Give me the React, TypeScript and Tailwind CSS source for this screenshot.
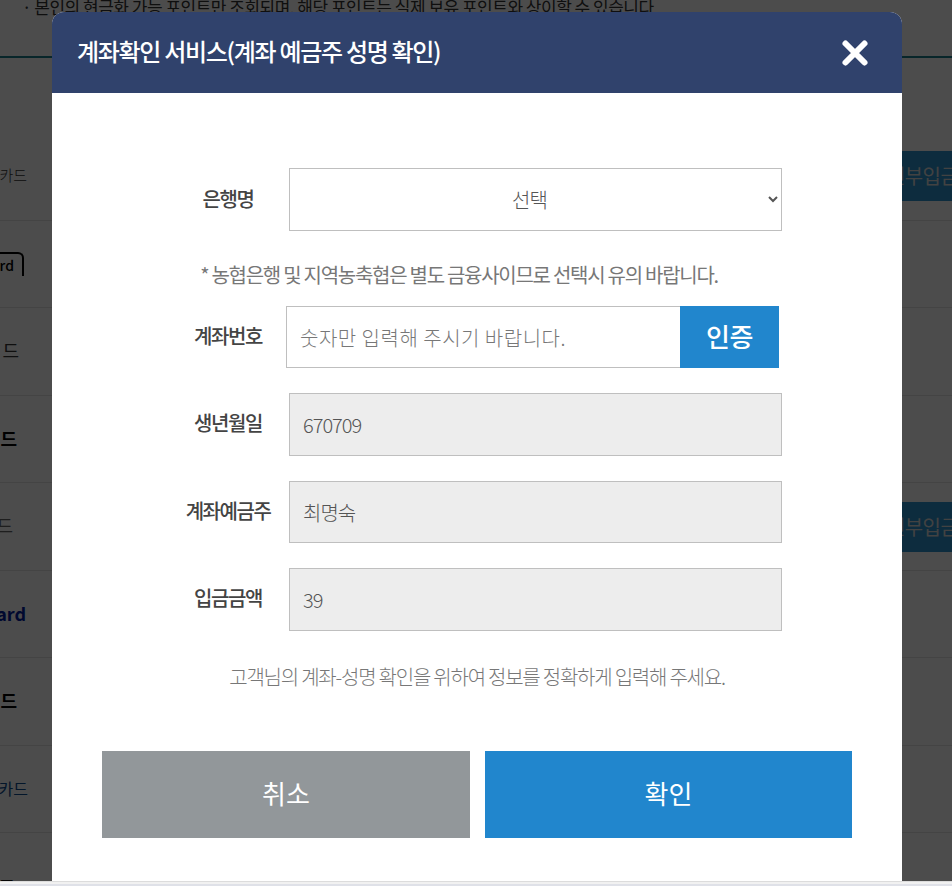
import React from "react";

const font = "font-['Noto_Sans_CJK_KR','Noto_Sans',sans-serif]";

// rows of the card list that sits behind the dialog
const rows = [
	{ h: "h-[87px]", w: "w-[27px] -mt-[3px]", text: "카드", cls: "text-[15px] text-[#333] font-light", pay: "-mt-[2px]" },
	{ h: "h-[87px]", w: "w-[24px]", text: "rd", cls: "text-[14px] text-black font-medium", outline: true },
	{ h: "h-[88px]", w: "w-[19px] -mt-[2px]", text: "드", cls: "text-[18px] text-[#333]" },
	{ h: "h-[87px]", w: "w-[17px] -mt-[2px]", text: "드", cls: "text-[18px] text-black font-bold" },
	{ h: "h-[88px]", w: "w-[13px] -mt-[2px]", text: "드", cls: "text-[18px] text-[#666]", pay: "mt-[1px]" },
	{ h: "h-[87px]", w: "w-[26px] -mt-[2px]", text: "ard", cls: "text-[18px] text-[#00209f] font-bold" },
	{ h: "h-[88px]", w: "w-[17px] -mt-[2px]", text: "드", cls: "text-[18px] text-black font-bold" },
	{ h: "h-[87px]", w: "w-[28px] -mt-[2px]", text: "카드", cls: "text-[16px] text-[#0a4a8c]" },
	{ h: "h-[87px] pt-[20px]", w: "w-[15px]", text: "드", cls: "text-[18px] text-[#111] font-bold" },
];

function Background() {
	return (
		<div className="h-full bg-white">
			<div className="h-[58px] border-b-2 border-[#1b7f8c] overflow-hidden">
				<p className="pl-[22px] text-[17px] leading-[16px] -mt-[1px] text-[#333] whitespace-nowrap tracking-[-0.5px]">
					· 본인의 현금화 가능 포인트만 조회되며, 해당 포인트는 실제 보유 포인트와 상이할 수 있습니다
				</p>
			</div>
			<div className="h-[76px]" />
			{rows.map((row, i) => (
				<div key={i} className={`${row.h} flex items-center justify-between border-b border-[#e3e3e3] bg-[#fefefe]`}>
					<div className={`${row.w} flex justify-end whitespace-nowrap ${row.cls}`}>
						{row.outline ? (
							<span className="border-t-2 border-r-2 border-black rounded-tr-[6px] pr-[8px] h-[24px] leading-[22px]">{row.text}</span>
						) : (
							row.text
						)}
					</div>
					{row.pay && (
						<div className={`w-[70px] h-[50px] bg-[#2c93cf] text-[#ddd] text-[20px] leading-[50px] tracking-[-0.6px] whitespace-nowrap overflow-hidden pl-[5px] ${row.pay}`}>
							전부입금
						</div>
					)}
				</div>
			))}
		</div>
	);
}

function Label({ children }: { children: React.ReactNode }) {
	return (
		<div className="w-[100px] ml-[126px] mr-[11px] text-center text-[20px] leading-[26px] font-medium text-[#444] tracking-[-1.45px] whitespace-nowrap">
			{children}
		</div>
	);
}

function ReadonlyField({ label, value, className, labelClass }: { label: string; value: string; className: string; labelClass: string }) {
	return (
		<div className={`flex items-center ${className}`}>
			<Label>
				<span className={`relative ${labelClass}`}>{label}</span>
			</Label>
			<input
				readOnly
				value={value}
				className="w-[493px] h-full border border-[#bfbfbf] bg-[#ededed] px-[13px] text-[20px] font-light text-[#555] outline-none tracking-[-1px]"
			/>
		</div>
	);
}

export default function App() {
	return (
		<div className={`h-[886px] overflow-hidden ${font}`}>
			<div className="relative h-[881px] overflow-hidden">
				<Background />
				<div className="absolute inset-0 bg-black/70" />
				<div className="absolute left-[52px] top-[12px] w-[850px] h-[900px] bg-white rounded-t-[12px]">
					<div className="h-[81px] bg-[#30426c] rounded-t-[12px] flex items-center justify-between pl-[25px] pr-[33px]">
						<h2 className="text-[24px] font-medium text-white tracking-[-1.3px] -mt-[3px]">
							계좌확인 서비스(계좌 예금주 성명 확인)
						</h2>
						<svg width="28" height="28" viewBox="0 0 28 28" fill="none" stroke="white" strokeWidth="6" strokeLinecap="round" aria-hidden="true">
							<path d="M4.5 4.5L23.5 23.5M23.5 4.5L4.5 23.5" />
						</svg>
					</div>

					<div className="pt-[75px]">
						<div className="flex items-center h-[63px]">
							<Label>
								<span className="relative -top-[1px]">은행명</span>
							</Label>
							<select className="w-[493px] h-full border border-[#bfbfbf] bg-white text-[20px] font-light text-[#555] tracking-[-1px] [text-align-last:center]">
								<option>선택</option>
							</select>
						</div>

						<p className="mt-[30px] h-[28px] pr-[36px] text-center text-[20px] leading-[28px] text-[#777] tracking-[-1.27px]">
							* 농협은행 및 지역농축협은 별도 금융사이므로 선택시 유의 바랍니다.
						</p>

						<div className="flex items-center h-[62px] mt-[17px]">
							<Label>
								<span className="relative -top-[1px]">계좌번호</span>
							</Label>
							<input
								placeholder="숫자만 입력해 주시기 바랍니다."
								className="ml-[-3px] w-[394px] h-full border border-[#bfbfbf] border-r-0 bg-white px-[13px] text-[20px] font-light outline-none tracking-[0.5px] placeholder:text-[#777]"
							/>
							<button className="w-[99px] h-full bg-[#2186cd] text-white text-[26px] font-medium tracking-[-0.5px] pb-[4px]">
								인증
							</button>
						</div>

						<ReadonlyField label="생년월일" value="670709" labelClass="-top-[2px]" className="h-[63px] mt-[25px]" />
						<ReadonlyField label="계좌예금주" value="최명숙" labelClass="-top-[1px]" className="h-[62px] mt-[25px]" />
						<ReadonlyField label="입금금액" value="39" labelClass="-top-[2px]" className="h-[63px] mt-[25px]" />

						<p className="mt-[32px] h-[28px] text-center text-[20px] leading-[28px] font-light text-[#777] tracking-[-1.22px]">
							고객님의 계좌-성명 확인을 위하여 정보를 정확하게 입력해 주세요.
						</p>

						<div className="flex mt-[60px] ml-[50px] gap-[15px]">
							<button className="w-[368px] h-[87px] bg-[#92979a] text-white text-[26px] font-normal pb-[5px]">취소</button>
							<button className="w-[367px] h-[87px] bg-[#2186cd] text-white text-[26px] font-normal pb-[5px]">확인</button>
						</div>
					</div>
				</div>
			</div>
			<div className="h-[5px] bg-[#f1f1f1] border-t border-[#dcdcdc] border-b-2 border-b-[#dfe1e8]" />
		</div>
	);
}
